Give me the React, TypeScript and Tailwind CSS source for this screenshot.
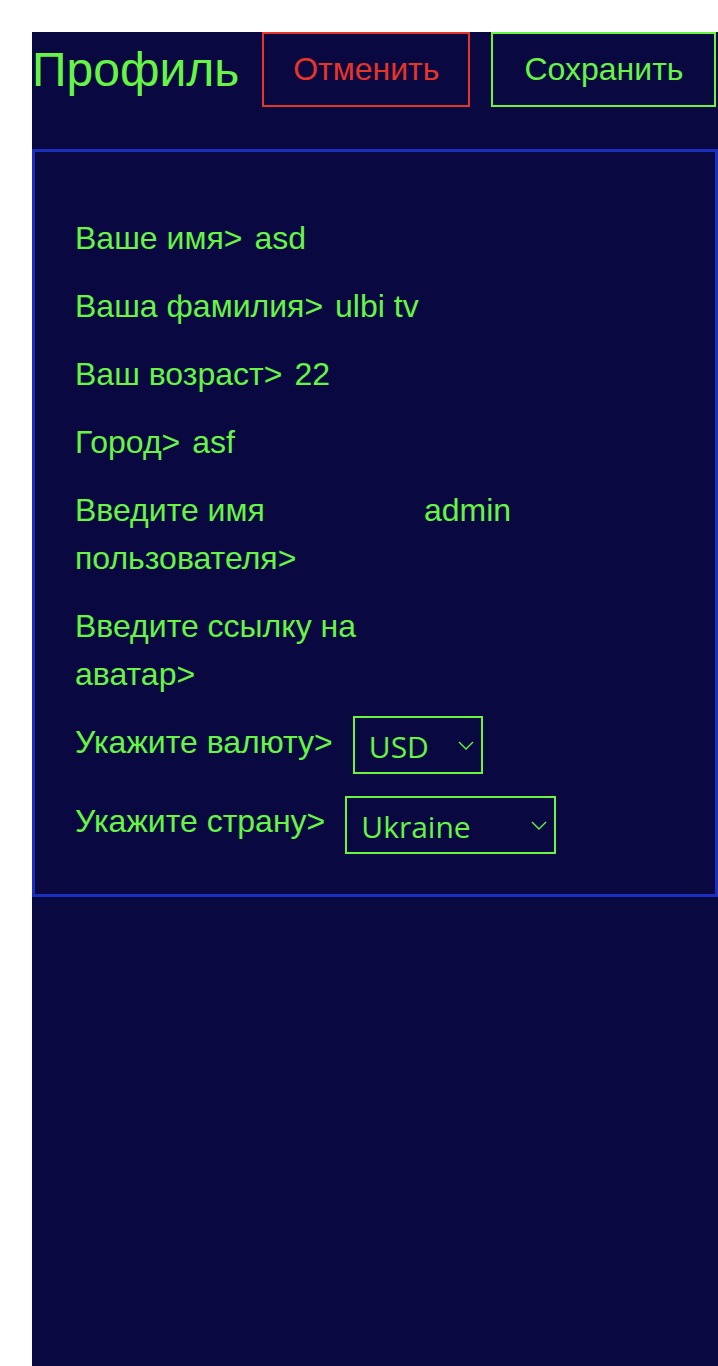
import React from 'react';

const font = "font-['Liberation_Sans',Arial,sans-serif]";

function Chevron() {
  return (
    <svg width="16" height="9" viewBox="0 0 16 9" fill="none" className="shrink-0">
      <path d="M1 1l7 7 7-7" stroke="#66f545" strokeWidth="1.4" />
    </svg>
  );
}

function Field({ label, value }: { label: string; value: string }) {
  return (
    <div className="flex items-start gap-3">
      <span className="leading-[48px]">{label}</span>
      <input
        readOnly
        value={value}
        className={`${font} w-[256px] shrink-0 bg-transparent text-[32px] leading-[48px] h-[48px] text-[#66f545] outline-none`}
      />
    </div>
  );
}

function FakeSelect({ value, width }: { value: string; width: string }) {
  return (
    <div className={`${width} flex h-[58px] shrink-0 items-center justify-between border-2 border-[#66f545] pl-[14px] pr-[7px]`}>
      <span className="font-['Open_Sans','Noto_Sans',sans-serif] text-[30px] leading-none pt-[3px]">{value}</span>
      <Chevron />
    </div>
  );
}

export default function App() {
  return (
    <div className="min-h-screen bg-white pt-8 pl-8">
      <div className={`${font} min-h-[1334px] bg-[#0a0840] text-[#66f545]`}>
        {/* Header */}
        <div className="flex items-center gap-[21px]">
          <h1 className="mr-[2px] shrink-0 text-[48px] leading-[55px]">Профиль</h1>
          <button className="shrink-0 border-2 border-[#e5342a] px-[29px] py-[17px] text-[32px] leading-[37px] text-[#e5342a]">
            Отменить
          </button>
          <button className="shrink-0 border-2 border-[#66f545] px-[31px] py-[17px] text-[32px] leading-[37px] text-[#66f545]">
            Сохранить
          </button>
        </div>

        {/* Card */}
        <div className="mt-[42px] border-[3px] border-[#1a2fbd] pl-10 pr-[35px] pt-[62px] pb-10 text-[32px]">
          <div className="flex flex-col gap-5">
            <Field label="Ваше имя>" value="asd" />
            <Field label="Ваша фамилия>" value="ulbi tv" />
            <Field label="Ваш возраст>" value="22" />
            <Field label="Город>" value="asf" />
            <Field label="Введите имя пользователя>" value="admin" />
            <Field label="Введите ссылку на аватар>" value="" />
            <div className="-mt-[2px] flex items-start gap-5">
              <span className="mt-[2px] leading-[48px]">Укажите валюту&gt;</span>
              <FakeSelect value="USD" width="w-[130px]" />
            </div>
            <div className="mt-[2px] flex items-start gap-5">
              <span className="mt-[1px] leading-[48px]">Укажите страну&gt;</span>
              <FakeSelect value="Ukraine" width="w-[211px]" />
            </div>
          </div>
        </div>
      </div>
    </div>
  );
}
